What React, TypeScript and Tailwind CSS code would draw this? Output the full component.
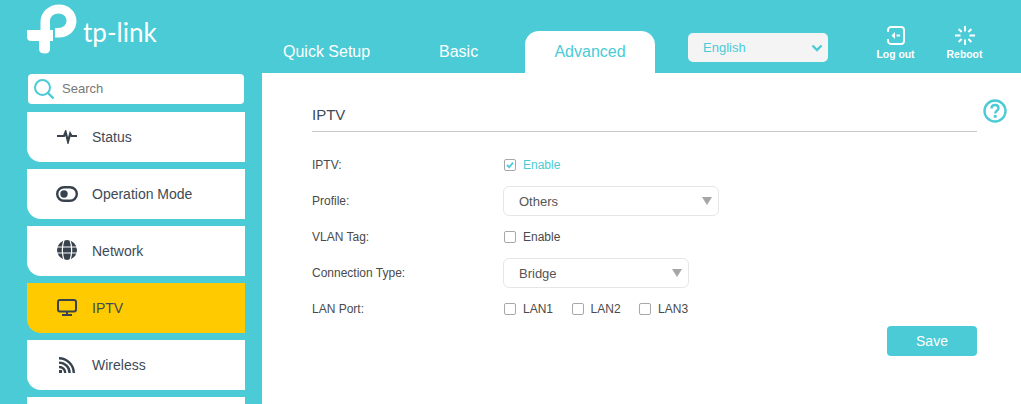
import React from "react";

const F = "font-['Liberation_Sans',Arial,sans-serif]";

function Logo() {
  return (
    <svg width="50" height="50" viewBox="0 0 50 50" className="block">
      <path d="M13.5 26 V18 C13.5 8 22 0.5 32 0.5 C42 0.5 49.5 8 49.5 17 C49.5 26 42 33.5 32 33.5 H28 V24 H31 C36 24 39.5 21 39.5 16.5 C39.5 12.5 36 9.5 31.5 9.5 C27 9.5 23 12.5 23 17 V26 Z" fill="#fff" />
      <path d="M0 26 H26 V37 H23 V45 C23 48 21 49.5 18 49.5 C14 49.5 12 48 12 45 V37 H4 C1.5 37 0 35.5 0 33 Z" fill="#fff" />
    </svg>
  );
}

function MenuIcon({ name }: { name: string }) {
  const c = "#37424d";
  if (name === "status")
    return (
      <svg width="20" height="14" viewBox="0 0 20 14">
        <path d="M0 6 H7 L8.6 2 L11 11.5 L13.2 3.6 L14.6 6 H20" fill="none" stroke={c} strokeWidth="2.2" />
      </svg>
    );
  if (name === "mode")
    return (
      <svg width="22" height="16" viewBox="0 0 22 16">
        <rect x="1.2" y="1.2" width="19.6" height="13.6" rx="6.8" fill="none" stroke={c} strokeWidth="2.4" />
        <circle cx="8" cy="8" r="3.7" fill={c} />
      </svg>
    );
  if (name === "network")
    return (
      <svg width="20" height="20" viewBox="0 0 20 20" className="-mt-[3px]">
        <circle cx="10" cy="10" r="10" fill={c} />
        <path d="M0 7 H20 M0 13 H20 M7 0 C5 6 5 14 7 20 M13 0 C15 6 15 14 13 20" fill="none" stroke="#fff" strokeWidth="1.2" />
      </svg>
    );
  if (name === "iptv")
    return (
      <svg width="20" height="17" viewBox="0 0 20 17" className="-mt-[2px]">
        <rect x="1" y="1" width="18" height="11.5" rx="2" fill="none" stroke={c} strokeWidth="2" />
        <path d="M10 12.5 V15.5 M5 16 H15" fill="none" stroke={c} strokeWidth="2" />
      </svg>
    );
  return (
    <svg width="16" height="16" viewBox="0 0 16 16" className="-mt-[1px]">
      <path d="M0 1.2 C8 1.2 14.8 8 14.8 16 M0 5.6 C6 5.6 10.6 10.2 10.6 16 M0 10 C3.6 10 6.2 12.6 6.2 16" fill="none" stroke={c} strokeWidth="2.4" />
      <rect x="0" y="13" width="3" height="3" fill={c} />
    </svg>
  );
}

function Check({ checked, label, cyan }: { checked?: boolean; label: string; cyan?: boolean }) {
  return (
    <span className="flex items-center">
      <span className="w-[12px] h-[12px] border border-[#a8a8a8] rounded-[2px] flex items-center justify-center bg-white">
        {checked && (
          <svg width="8" height="8" viewBox="0 0 8 8">
            <path d="M1 4 L3.2 6.2 L7 1.6" fill="none" stroke="#4acbd6" strokeWidth="1.8" />
          </svg>
        )}
      </span>
      <span className={`ml-[7px] text-[12px] ${cyan ? "text-[#4acbd6]" : "text-[#4a4a4a]"}`}>{label}</span>
    </span>
  );
}

function Select({ value, w }: { value: string; w: string }) {
  return (
    <div className={`${w} h-[30px] border border-[#e6e6e6] rounded-[6px] flex items-center justify-between pl-[15px] pr-[6px] text-[13px] text-[#555] bg-white`}>
      <span className="pt-px">{value}</span>
      <span className="w-0 h-0 border-l-[5.5px] border-r-[5.5px] border-t-[8px] border-l-transparent border-r-transparent border-t-[#a6a6a6]" />
    </div>
  );
}

function Row({ label, h, children }: { label: string; h: string; children: React.ReactNode }) {
  return (
    <div className={`flex items-center ${h}`}>
      <span className="w-[191px] text-[12px] text-[#4a4a4a]">{label}</span>
      {children}
    </div>
  );
}

const items = [
  { k: "status", t: "Status" },
  { k: "mode", t: "Operation Mode" },
  { k: "network", t: "Network" },
  { k: "iptv", t: "IPTV", active: true },
  { k: "wireless", t: "Wireless" },
];

export default function App() {
  return (
    <div className={`${F} w-[1021px] h-[404px] overflow-hidden bg-[#4acbd6]`}>
      <header className="h-[73px] flex relative">
        <div className="w-[262px] pl-[27px] pt-[4px] flex items-start shrink-0">
          <Logo />
          <span className="text-white font-['Lato',sans-serif] text-[26px] leading-none ml-[6px] mt-[15px]">tp-link</span>
        </div>
        <nav className="flex items-end text-[16px]">
          <div className="w-[131px] pl-[21px] h-[42px] flex items-center text-white">Quick Setup</div>
          <div className="w-[132px] pl-[46px] h-[42px] flex items-center text-white">Basic</div>
          <div className="w-[130px] h-[42px] bg-white rounded-t-[14px] flex items-center justify-center text-[#4acbd6]">Advanced</div>
        </nav>
        <div className="ml-[33px] mt-[33px] w-[140px] h-[29px] bg-[#f4f4f4] rounded-[5px] flex items-center justify-between pl-[15px] pr-[5px] text-[13px] text-[#4acbd6]">
          <span>English</span>
          <svg width="12" height="8" viewBox="0 0 12 8">
            <path d="M1.5 1.5 L6 6 L10.5 1.5" fill="none" stroke="#4acbd6" strokeWidth="2.4" />
          </svg>
        </div>
        <div className="ml-[49px] w-[37px] pt-[26px] flex flex-col items-center text-white text-[10.4px] font-bold">
          <svg width="18" height="19" viewBox="0 0 18 19">
            <path d="M1 6 V4 a3 3 0 0 1 3 -3 H14 a3 3 0 0 1 3 3 V15 a3 3 0 0 1 -3 3 H4 a3 3 0 0 1 -3 -3 V13" fill="none" stroke="#fff" strokeWidth="1.9" />
            <path d="M8 6 L4.5 9.5 L8 13 Z" fill="#fff" />
            <path d="M9.5 9.5 H13" stroke="#fff" strokeWidth="1.9" />
          </svg>
          <span className="mt-[3px] leading-[14px] whitespace-nowrap">Log out</span>
        </div>
        <div className="ml-[32px] w-[37px] pt-[26px] flex flex-col items-center text-white text-[10.4px] font-bold">
          <svg width="20" height="19" viewBox="0 0 20 19">
            <path d="M10 0 V5.5 M10 13.5 V19 M0 9.5 H5.5 M14.5 9.5 H20 M3.6 3 L6.6 6 M16.4 3 L13.4 6 M3.6 16 L6.6 13 M16.4 16 L13.4 13" fill="none" stroke="#fff" strokeWidth="1.9" />
          </svg>
          <span className="mt-[3px] leading-[14px]">Reboot</span>
        </div>
      </header>
      <div className="flex h-[331px]">
        <aside className="w-[262px] shrink-0 pl-[27px] overflow-hidden">
          <div className="ml-px mt-px w-[216px] h-[30px] bg-white rounded-[4px] flex items-center pl-[5px]">
            <svg width="22" height="22" viewBox="0 0 22 22">
              <circle cx="9.5" cy="9.5" r="7.5" fill="none" stroke="#4acbd6" strokeWidth="2" />
              <path d="M15 15 L20.5 20.5" stroke="#4acbd6" strokeWidth="2.4" />
            </svg>
            <span className="ml-[7px] text-[13px] text-[#777]">Search</span>
          </div>
          <div className="mt-[8px] flex flex-col gap-[7px]">
            {items.map((i) => (
              <div key={i.k} className={`w-[218px] h-[50px] rounded-bl-[14px] flex items-center text-[14px] text-[#3e4a56] ${i.active ? "bg-[#ffcb00]" : "bg-white"}`}>
                <span className="w-[65px] pl-[29px] pr-[14px] flex justify-center shrink-0"><MenuIcon name={i.k} /></span>
                <span>{i.t}</span>
              </div>
            ))}
            <div className="w-[218px] h-[50px] bg-white shrink-0" />
          </div>
        </aside>
        <main className="flex-1 bg-white pl-[50px] pr-[44px] relative">
          <div className="mt-[29px] h-[30px] border-b border-[#c8c8c8] text-[15px] leading-[26px] text-[#3e4a56]">IPTV</div>
          <svg width="24" height="24" viewBox="0 0 24 24" className="absolute right-[14px] top-[26px]">
            <circle cx="12" cy="12" r="10.5" fill="none" stroke="#4acbd6" strokeWidth="2.4" />
            <path d="M8.5 9.5 C8.5 7 10 6 12 6 C14.2 6 15.5 7.4 15.5 9.2 C15.5 11.6 12.2 11.8 12.2 14.5" fill="none" stroke="#4acbd6" strokeWidth="2.4" />
            <rect x="10.8" y="16" width="2.8" height="2.8" fill="#4acbd6" />
          </svg>
          <div className="mt-[15px]">
            <Row label="IPTV:" h="h-[36px]"><span className="ml-px"><Check checked cyan label="Enable" /></span></Row>
            <Row label="Profile:" h="h-[36px]"><Select value="Others" w="w-[216px]" /></Row>
            <Row label="VLAN Tag:" h="h-[36px]"><span className="ml-px"><Check label="Enable" /></span></Row>
            <Row label="Connection Type:" h="h-[36px]"><Select value="Bridge" w="w-[186px]" /></Row>
            <Row label="LAN Port:" h="h-[36px]">
              <span className="flex gap-[18.5px] ml-px">
                <Check label="LAN1" />
                <Check label="LAN2" />
                <Check label="LAN3" />
              </span>
            </Row>
          </div>
          <div className="flex justify-end mt-[-1px]">
            <div className="w-[90px] h-[30px] bg-[#4acbd6] rounded-[4px] text-white text-[14px] flex items-center justify-center">Save</div>
          </div>
        </main>
      </div>
    </div>
  );
}
